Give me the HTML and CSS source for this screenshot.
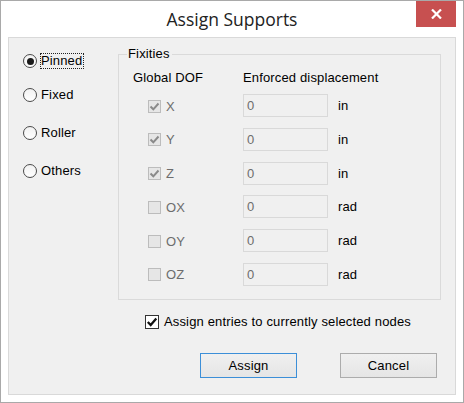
FILE: index.html
```html
<!DOCTYPE html>
<html>
<head>
<meta charset="utf-8">
<link rel="stylesheet" href="styles.css">
</head>
<body>
<div class="window">
  <div class="titlebar">
    <div></div>
    <div class="title">Assign Supports</div>
    <div class="close">
      <svg width="11" height="10" viewBox="0 0 11 10"><path d="M1 0.5 L10 9.5 M10 0.5 L1 9.5" stroke="#fff" stroke-width="2.2" fill="none"/></svg>
    </div>
  </div>
  <div class="client">
    <div class="top">
      <div class="radios">
        <div class="radio r1"><span class="circle"><span class="dot"></span></span><span class="rlabel focus">Pinned</span></div>
        <div class="radio r2"><span class="circle"></span><span class="rlabel">Fixed</span></div>
        <div class="radio r3"><span class="circle"></span><span class="rlabel">Roller</span></div>
        <div class="radio r3"><span class="circle"></span><span class="rlabel">Others</span></div>
      </div>
      <div class="group">
        <span class="legend">Fixities</span>
        <div class="header">
          <div class="h1">Global DOF</div>
          <div class="h2">Enforced displacement</div>
        </div>
        <div class="rows">
          <div class="dof"><span class="cb dis"><svg width="11" height="11" viewBox="0 0 11 11"><path d="M1.5 5.5 L4.3 8.3 L9.5 2.5" stroke="#8a8a8a" stroke-width="2" fill="none"/></svg></span><span class="dlabel">X</span></div>
          <div class="input">0</div>
          <div class="unit">in</div>

          <div class="dof"><span class="cb dis"><svg width="11" height="11" viewBox="0 0 11 11"><path d="M1.5 5.5 L4.3 8.3 L9.5 2.5" stroke="#8a8a8a" stroke-width="2" fill="none"/></svg></span><span class="dlabel">Y</span></div>
          <div class="input">0</div>
          <div class="unit">in</div>

          <div class="dof"><span class="cb dis"><svg width="11" height="11" viewBox="0 0 11 11"><path d="M1.5 5.5 L4.3 8.3 L9.5 2.5" stroke="#8a8a8a" stroke-width="2" fill="none"/></svg></span><span class="dlabel">Z</span></div>
          <div class="input">0</div>
          <div class="unit">in</div>

          <div class="dof"><span class="cb dis"></span><span class="dlabel">OX</span></div>
          <div class="input">0</div>
          <div class="unit">rad</div>

          <div class="dof"><span class="cb dis"></span><span class="dlabel">OY</span></div>
          <div class="input">0</div>
          <div class="unit">rad</div>

          <div class="dof"><span class="cb dis"></span><span class="dlabel">OZ</span></div>
          <div class="input">0</div>
          <div class="unit">rad</div>
        </div>
      </div>
    </div>
    <div class="assign-row">
      <span class="cb on"><svg width="12" height="12" viewBox="0 0 12 12"><path d="M1.8 6 L4.7 9 L10.3 2.6" stroke="#111" stroke-width="2.3" fill="none"/></svg></span>
      <span class="alabel">Assign entries to currently selected nodes</span>
    </div>
    <div class="buttons">
      <div class="btn default">Assign</div>
      <div class="btn">Cancel</div>
    </div>
  </div>
</div>
</body>
</html>
```

FILE: styles.css
```css
* { box-sizing: border-box; }
html, body { margin: 0; padding: 0; background: #fff; }
body {
  font-family: "Liberation Sans", Arial, sans-serif;
  font-size: 13px;
  letter-spacing: 0.15px;
  color: #000;
}
.window {
  width: 464px;
  height: 403px;
  border: 1px solid #a9a9a9;
  background: #fff;
  padding: 0 7px 7px 7px;
  display: flex;
  flex-direction: column;
}
.titlebar {
  height: 36px;
  display: grid;
  grid-template-columns: 1fr auto 1fr;
}
.title {
  font-family: "Open Sans", "Noto Sans", sans-serif;
  font-size: 17.5px;
  letter-spacing: 0;
  color: #222;
  line-height: 20px;
  padding-top: 8px;
  white-space: nowrap;
}
.close {
  justify-self: end;
  width: 40px;
  height: 26px;
  background: #c75050;
  display: flex;
  align-items: center;
  justify-content: center;
  padding-bottom: 1px;
}
.close svg { display: block; }
.client {
  flex: 1;
  border: 1px solid #d9d9d9;
  background: #f0f0f0;
  display: flex;
  flex-direction: column;
}
.top {
  display: flex;
  padding-left: 14px;
  padding-top: 16px;
}
.radios {
  width: 95px;
  display: flex;
  flex-direction: column;
}
.radio {
  display: flex;
  align-items: center;
  height: 16px;
}
.r1 { margin-top: -1px; }
.r2 { margin-top: 17.6px; }
.r3 { margin-top: 22px; }
.circle {
  width: 14px;
  height: 14px;
  border-radius: 50%;
  border: 1px solid #4a4a4a;
  background: linear-gradient(#f2f2f2, #ffffff);
  display: flex;
  align-items: center;
  justify-content: center;
  flex: none;
}
.dot {
  width: 7px;
  height: 7px;
  border-radius: 50%;
  background: #1a1a1a;
}
.rlabel {
  margin-left: 3px;
  border: 1px dotted transparent;
  padding: 0 1px 0 0;
  line-height: 14px;
}
.rlabel.focus { border-color: #222; }
.group {
  position: relative;
  width: 323px;
  border: 1px solid #dadada;
  padding: 15px 0 13px 0;
}
.legend {
  position: absolute;
  top: -9px;
  left: 8px;
  padding: 0 2px 0 1px;
  background: #f0f0f0;
  line-height: 16px;
}
.header {
  display: flex;
  line-height: 16px;
}
.h1 { width: 124px; padding-left: 14px; }
.rows {
  margin-top: 8px;
  display: grid;
  grid-template-columns: 124px 85px auto;
  grid-auto-rows: 23px;
  row-gap: 10.8px;
}
.dof {
  display: flex;
  align-items: center;
  padding-left: 29px;
  padding-top: 1px;
}
.cb {
  width: 13px;
  height: 13px;
  flex: none;
  display: flex;
  align-items: center;
  justify-content: center;
}
.cb svg { display: block; }
.cb.dis {
  border: 1px solid #bcbcbc;
  background: #e6e6e6;
}
.cb.on {
  width: 14px;
  height: 14px;
  border: 1px solid #333;
  background: #fff;
}
.dlabel {
  margin-left: 5px;
  color: #6d6d6d;
}
.input {
  border: 1px solid #d9d9d9;
  background: #f0f0f0;
  color: #6d6d6d;
  padding-left: 3px;
  line-height: 21px;
}
.unit {
  padding-left: 10px;
  line-height: 23px;
}
.assign-row {
  display: flex;
  align-items: center;
  height: 16px;
  margin-top: 14px;
  padding-left: 136px;
}
.alabel { margin-left: 5px; }
.buttons {
  display: flex;
  justify-content: flex-end;
  gap: 43px;
  padding-right: 18px;
  margin-top: 23px;
}
.btn {
  width: 97px;
  height: 25px;
  border: 1px solid #acacac;
  background: linear-gradient(#f0f0f0, #e5e5e5);
  display: flex;
  align-items: center;
  justify-content: center;
}
.btn.default { border-color: #3c8fd8; }
```
